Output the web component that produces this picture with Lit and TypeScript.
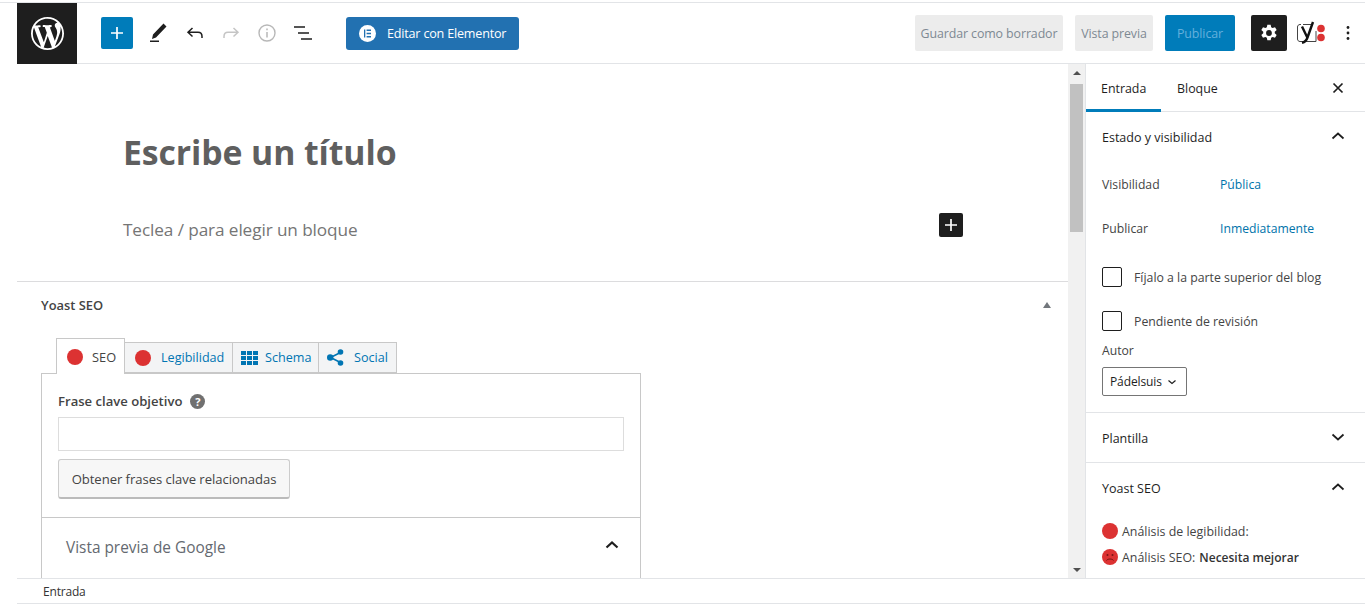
import { LitElement, html, css } from "lit";
import { customElement } from "lit/decorators.js";

const chevUp = html`<svg class="chev" width="24" height="24" viewBox="0 0 24 24"><path d="M6.5 14.5 12 9.5l5.5 5" fill="none" stroke="#1e1e1e" stroke-width="1.7"/></svg>`;
const chevDown = html`<svg class="chev" width="24" height="24" viewBox="0 0 24 24"><path d="M6.5 9.5 12 14.5l5.5-5" fill="none" stroke="#1e1e1e" stroke-width="1.7"/></svg>`;
const dot = (s: number) => html`<svg width=${s} height=${s} viewBox="0 0 16 16"><circle cx="8" cy="8" r="8" fill="#dc3232"/></svg>`;

@customElement("app-root")
export class AppRoot extends LitElement {
  static styles = css`
    :host { display: block; width: 1365px; height: 606px; overflow: hidden; background: #fff; color: #1e1e1e;
      font-family: "Open Sans", "Noto Sans", sans-serif; font-size: 12px; }
    * { box-sizing: border-box; }
    svg { display: block; flex: none; }
    .app { height: 602px; margin-top: 2px; display: flex; flex-direction: column; border-top: 1px solid #e2e4e7; }
    .top { height: 61px; flex: none; display: flex; align-items: center; margin-left: 17px; border-bottom: 1px solid #e2e4e7; padding-right: 5px; }
    .logo { width: 60px; height: 61px; background: #1e1e1e; display: flex; align-items: center; justify-content: center; margin-bottom: -1px; }
    .add { width: 32px; height: 32px; margin-left: 24px; background: #007cba; border-radius: 2px; display: flex; align-items: center; justify-content: center; }
    .tools { display: flex; align-items: center; gap: 12px; margin-left: 14px; }
    .elementor { margin-left: 31px; width: 173px; height: 33px; background: #2271b1; border-radius: 3px; color: #fff; display: flex; align-items: center; gap: 11px; padding: 1px 0 0 13px; font-size: 12.6px; font-weight: 500; letter-spacing: -0.2px; }
    .eicon { width: 17px; height: 17px; border-radius: 50%; background: #fff; display: flex; align-items: center; justify-content: center; margin-top: -1px; }
    .spacer { flex: 1; }
    .btn { height: 36px; padding-top: 1px; display: flex; align-items: center; justify-content: center; border-radius: 2px; font-size: 12.4px; letter-spacing: -0.1px; }
    .grey { background: #ececec; color: #7e8993; }
    .draft { width: 148px; margin-right: 12px; }
    .prev { width: 78px; margin-right: 12px; }
    .pub { width: 70px; background: #007cba; color: #64b0dc; margin-right: 16px; }
    .gear { width: 36px; height: 36px; background: #1e1e1e; border-radius: 2px; display: flex; align-items: center; justify-content: center; margin-right: 10px; }
    .yoast { width: 30px; margin-right: 9px; }
    .more { width: 24px; display: flex; justify-content: center; }
    .body { flex: 1; min-height: 0; display: flex; margin-left: 17px; }
    .main { flex: 1; min-width: 0; display: flex; flex-direction: column; overflow: hidden; }
    .title { margin: 65px 0 0 106px; font-size: 33.8px; line-height: 46px; font-weight: 700; color: #5f5f5f; letter-spacing: -0.1px; }
    .para { display: flex; align-items: center; justify-content: space-between; margin: 39px 105px 0 106px; height: 30px; font-size: 17.2px; color: #757575; letter-spacing: -0.1px; }
    .ins { width: 24px; height: 24px; background: #1e1e1e; border-radius: 2px; display: flex; align-items: center; justify-content: center; margin-top: -8px; }
    .meta { margin-top: 37px; border-top: 1px solid #dcdcde; flex: 1; padding: 0 16px 0 24px; min-height: 0; }
    .mhead { height: 46px; display: flex; align-items: center; justify-content: space-between; font-weight: 600; color: #444; font-size: 12.9px; }
    .tri { width: 0; height: 0; border: 4px solid transparent; border-bottom: 6px solid #72777c; border-top: 0; margin-right: 1px; }
    .tabs { display: flex; align-items: flex-end; margin-left: 15px; height: 36px; margin-top: 9px; position: relative; z-index: 1; }
    .tab { height: 31px; display: flex; align-items: center; border: 1px solid #c8c8c8; border-left: 0; background: #f3f4f5; color: #0075b3; padding: 0 0 0 10px; gap: 10px; font-size: 12.6px; }
    .tab.on { height: 36px; border-left: 1px solid #c8c8c8; border-bottom: 0; background: #fff; color: #444; width: 69px; padding: 0 0 0 10px; gap: 9px; margin-bottom: -1px; font-size: 12.8px; }
    .leg { width: 108px; }
    .sch { width: 86px; padding-left: 8px; gap: 7px; }
    .soc { width: 78px; padding-left: 8px; gap: 10px; }
    .panel { width: 600px; border: 1px solid #c8c8c8; height: 250px; }
    .fields { padding: 16px 16px 18px; border-bottom: 1px solid #c8c8c8; height: 144px; }
    .lab { display: flex; align-items: center; gap: 8px; font-weight: 600; color: #444; font-size: 13.1px; height: 22px; }
    .help { width: 15px; height: 15px; border-radius: 50%; background: #707070; color: #fff; font-size: 11px; font-weight: 700; display: flex; align-items: center; justify-content: center; }
    .inp { height: 34px; border: 1px solid #ddd; margin-top: 5px; }
    .rel { margin-top: 8px; width: 232px; height: 40px; background: #f7f7f7; border: 1px solid #ccc; border-bottom: 2px solid #bbb; border-radius: 3px; display: flex; align-items: center; justify-content: center; color: #444; font-size: 13.1px; letter-spacing: -0.05px; }
    .gprev { height: 58px; display: flex; align-items: center; justify-content: space-between; padding: 0 17px 0 24px; font-size: 15.4px; color: #646970; }
    .gprev svg { margin-top: -4px; }
    .gprev path { stroke-width: 2.2; }
    .scroll { width: 17px; flex: none; background: #f1f1f1; display: flex; flex-direction: column; align-items: center; justify-content: space-between; position: relative; }
    .sb { height: 17px; display: flex; align-items: center; justify-content: center; }
    .up { width: 0; height: 0; border: 4px solid transparent; border-bottom: 4px solid #505050; border-top: 0; }
    .down { width: 0; height: 0; border: 4px solid transparent; border-top: 4px solid #505050; border-bottom: 0; }
    .thumb { position: absolute; left: 2px; top: 20px; width: 13px; height: 148px; background: #c1c1c1; }
    .side { width: 280px; flex: none; border-left: 1px solid #e2e4e7; overflow: hidden; display: flex; flex-direction: column; }
    .stabs { height: 48px; flex: none; display: flex; align-items: stretch; border-bottom: 1px solid #e2e4e7; padding-right: 17px; }
    .stab { display: flex; align-items: center; padding: 1px 15px 0 16px; font-size: 12.4px; font-weight: 500; color: #1e1e1e; position: relative; }
    .stab.on { width: 75px; padding-left: 15px; padding-right: 0; }
    .stab.on::after { content: ""; position: absolute; left: 0; right: 0; bottom: -1px; height: 3px; background: #007cba; }
    .close { margin-left: auto; display: flex; align-items: center; }
    .sec { border-bottom: 1px solid #e2e4e7; padding: 0 16px; }
    .sech { height: 50px; display: flex; align-items: center; justify-content: space-between; font-weight: 500; font-size: 12.5px; color: #1e1e1e; }
    .sech.short { height: 49px; padding-top: 2px; }
    .chev { margin-right: -1px; margin-top: -3px; }
    .row { display: flex; height: 44px; align-items: center; font-size: 12.2px; color: #444; }
    .row .k { width: 118px; }
    .row .v { color: #0073aa; padding-top: 1px; }
    .chk { display: flex; align-items: center; gap: 12px; height: 44px; font-size: 12.3px; color: #444; }
    .first { margin-top: 5px; }
    .box { width: 20px; height: 20px; border: 1px solid #1e1e1e; border-radius: 2px; flex: none; }
    .autor { color: #444; font-size: 12.2px; margin-top: -1px; }
    .sel { width: 85px; height: 29px; margin-top: 8px; border: 1px solid #757575; border-radius: 2px; display: flex; align-items: center; padding-left: 7px; gap: 5px; color: #1e1e1e; font-size: 12px; letter-spacing: -0.1px; }
    .sts { padding-top: 5px; }
    .st { display: flex; align-items: center; gap: 4px; height: 26px; font-size: 12.4px; color: #444; }
    .st b { font-weight: 600; color: #333; font-size: 12px; }
    .foot { height: 26px; flex: none; margin-left: 17px; display: flex; align-items: center; padding-left: 26px; font-size: 12px; color: #333; border-top: 1px solid #e2e4e7; border-bottom: 1px solid #e2e4e7; letter-spacing: -0.2px; }
  `;

  render() {
    return html`<div class="app">
      <div class="top">
        <div class="logo"><svg width="33" height="33" viewBox="0 0 20 20"><path fill="#fff" d="M20 10c0-5.51-4.49-10-10-10C4.48 0 0 4.49 0 10c0 5.52 4.48 10 10 10 5.51 0 10-4.48 10-10zM7.78 15.37L4.37 6.22c.55-.02 1.17-.08 1.17-.08.5-.06.44-1.13-.06-1.11 0 0-1.45.11-2.37.11-.18 0-.37 0-.58-.01C4.12 2.69 6.87 1.11 10 1.11c2.33 0 4.45.87 6.05 2.34-.68-.11-1.65.39-1.65 1.58 0 .74.45 1.36.9 2.1.35.61.55 1.36.55 2.46 0 1.49-1.4 5-1.4 5l-3.03-8.37c.54-.02.82-.17.82-.17.5-.05.44-1.25-.06-1.22 0 0-1.44.12-2.38.12-.87 0-2.33-.12-2.33-.12-.5-.03-.56 1.2-.06 1.22l.92.08 1.26 3.41zM17.41 10c.24-.64.74-1.87.43-4.25.7 1.29 1.05 2.71 1.05 4.25 0 3.29-1.73 6.24-4.4 7.78.97-2.59 1.94-5.2 2.92-7.78zM6.1 18.09C3.12 16.65 1.11 13.53 1.11 10c0-1.3.23-2.48.72-3.59C3.25 10.3 4.67 14.2 6.1 18.09zm4.03-6.63l2.58 6.98c-.86.29-1.76.45-2.71.45-.79 0-1.57-.11-2.29-.33.81-2.38 1.62-4.74 2.42-7.1z"/></svg></div>
        <div class="add"><svg width="18" height="18" viewBox="0 0 18 18"><path d="M9 3v12M3 9h12" stroke="#fff" stroke-width="1.7"/></svg></div>
        <div class="tools">
          <svg width="24" height="24" viewBox="0 0 24 24"><path fill="#1e1e1e" d="M16.5 2.5 19.5 5.5 9 16.5 5 18 6 13.5zM3 19.5h9v1.6H3z"/></svg>
          <svg width="24" height="24" viewBox="0 0 24 24"><path d="M9.5 7 5 11.3l4.5 4.2M5.3 11.3h9.7c2.5 0 4 1.7 4 4.2v1.5" fill="none" stroke="#1e1e1e" stroke-width="1.5"/></svg>
          <svg width="24" height="24" viewBox="0 0 24 24"><path d="M14.5 7 19 11.3l-4.5 4.2M18.7 11.3H9c-2.5 0-4 1.7-4 4.2v1.5" fill="none" stroke="#c5c5c5" stroke-width="1.5"/></svg>
          <svg width="24" height="24" viewBox="0 0 24 24"><circle cx="12" cy="12" r="8" fill="none" stroke="#b8b8b8" stroke-width="1.4"/><path d="M12 11v5.5M12 7.6v1.7" stroke="#b8b8b8" stroke-width="1.5"/></svg>
          <svg width="24" height="24" viewBox="0 0 24 24"><path d="M3 6h11M7 12h11M10 18h11" stroke="#1e1e1e" stroke-width="1.7"/></svg>
        </div>
        <div class="elementor"><span class="eicon"><svg width="9" height="9" viewBox="0 0 9 9"><path d="M1 .5h1.3v8H1zM3.6.5H8v1.4H3.6zM3.6 3.8H8v1.4H3.6zM3.6 7.1H8v1.4H3.6z" fill="#2271b1"/></svg></span>Editar con Elementor</div>
        <div class="spacer"></div>
        <div class="btn grey draft">Guardar como borrador</div>
        <div class="btn grey prev">Vista previa</div>
        <div class="btn pub">Publicar</div>
        <div class="gear"><svg width="20" height="20" viewBox="0 0 24 24"><path fill="#fff" fill-rule="evenodd" d="M10 2h4l.6 3 1.7 1 2.9-1 2 3.4-2.3 2v2l2.3 2-2 3.4-2.9-1-1.7 1-.6 3h-4l-.6-3-1.7-1-2.9 1-2-3.4 2.3-2v-2l-2.3-2 2-3.4 2.9 1 1.7-1zM12 8.5a3.5 3.5 0 1 0 0 7 3.5 3.5 0 0 0 0-7z"/></svg></div>
        <div class="yoast"><svg width="30" height="24" viewBox="0 0 30 24"><path d="M4 3.5H3c-1.4 0-2.5 1-2.5 2.5v12c0 1.4 1 2.5 2.5 2.5h16V10" fill="none" stroke="#444" stroke-width="1"/><path d="M6 3.5h10" stroke="#444" stroke-width="1"/><path d="M5 5.5 10.3 16.5M16 1 10.5 16.5C9.5 19.5 8 21 5 21.8" fill="none" stroke="#111" stroke-width="2.4"/><circle cx="24" cy="7.5" r="3.8" fill="#dc3232"/><circle cx="24" cy="16.5" r="3.8" fill="#dc3232"/></svg></div>
        <div class="more"><svg width="24" height="24" viewBox="0 0 24 24"><circle cx="12" cy="6.5" r="1.4" fill="#1e1e1e"/><circle cx="12" cy="12" r="1.4" fill="#1e1e1e"/><circle cx="12" cy="17.5" r="1.4" fill="#1e1e1e"/></svg></div>
      </div>
      <div class="body">
        <div class="main">
          <div class="title">Escribe un título</div>
          <div class="para"><span>Teclea / para elegir un bloque</span><span class="ins"><svg width="16" height="16" viewBox="0 0 16 16"><path d="M8 2v12M2 8h12" stroke="#fff" stroke-width="1.7"/></svg></span></div>
          <div class="meta">
            <div class="mhead"><span>Yoast SEO</span><span class="tri"></span></div>
            <div class="tabs">
              <div class="tab on">${dot(16)}SEO</div>
              <div class="tab leg">${dot(16)}Legibilidad</div>
              <div class="tab sch"><svg width="17" height="14" viewBox="0 0 17 14"><path fill="#0075b3" d="M0 0h5v4H0zM6 0h5v4H6zM12 0h5v4h-5zM0 5h5v4H0zM6 5h5v4H6zM12 5h5v4h-5zM0 10h5v4H0zM6 10h5v4H6zM12 10h5v4h-5z"/></svg>Schema</div>
              <div class="tab soc"><svg width="17" height="17" viewBox="0 0 17 17"><path d="M13.5 3.5 3.5 8.5l10 5" fill="none" stroke="#0075b3" stroke-width="1.6"/><circle cx="13.5" cy="3" r="2.8" fill="#0075b3"/><circle cx="3.2" cy="8.5" r="3.2" fill="#0075b3"/><circle cx="13.5" cy="14" r="2.8" fill="#0075b3"/></svg>Social</div>
            </div>
            <div class="panel">
              <div class="fields">
                <div class="lab">Frase clave objetivo <span class="help">?</span></div>
                <div class="inp"></div>
                <div class="rel">Obtener frases clave relacionadas</div>
              </div>
              <div class="gprev"><span>Vista previa de Google</span>${chevUp}</div>
            </div>
          </div>
        </div>
        <div class="scroll"><div class="sb"><span class="up"></span></div><div class="thumb"></div><div class="sb"><span class="down"></span></div></div>
        <div class="side">
          <div class="stabs">
            <div class="stab on">Entrada</div>
            <div class="stab">Bloque</div>
            <div class="close"><svg width="20" height="20" viewBox="0 0 20 20"><path d="M5.5 5.5l9 9M14.5 5.5l-9 9" stroke="#1e1e1e" stroke-width="1.7"/></svg></div>
          </div>
          <div class="sec" style="height:301px">
            <div class="sech"><span>Estado y visibilidad</span>${chevUp}</div>
            <div class="row"><span class="k">Visibilidad</span><span class="v">Pública</span></div>
            <div class="row"><span class="k">Publicar</span><span class="v">Inmediatamente</span></div>
            <div class="chk first"><span class="box"></span>Fíjalo a la parte superior del blog</div>
            <div class="chk"><span class="box"></span>Pendiente de revisión</div>
            <div class="autor">Autor</div>
            <div class="sel">Pádelsuis <svg width="10" height="10" viewBox="0 0 10 10"><path d="M1.5 3.5 5 6.5l3.5-3" fill="none" stroke="#1e1e1e" stroke-width="1.2"/></svg></div>
          </div>
          <div class="sec"><div class="sech short"><span>Plantilla</span>${chevDown}</div></div>
          <div class="sec" style="border:0">
            <div class="sech"><span>Yoast SEO</span>${chevUp}</div>
            <div class="sts">
              <div class="st">${dot(16)}Análisis de legibilidad:</div>
              <div class="st"><svg width="16" height="16" viewBox="0 0 16 16"><circle cx="8" cy="8" r="8" fill="#dc3232"/><circle cx="5.5" cy="6" r="1" fill="#7a1414"/><circle cx="10.5" cy="6" r="1" fill="#7a1414"/><path d="M4.5 11.5c1-2 6-2 7 0" fill="none" stroke="#7a1414" stroke-width="1"/></svg>Análisis SEO: <b>Necesita mejorar</b></div>
            </div>
          </div>
        </div>
      </div>
      <div class="foot">Entrada</div>
    </div>`;
  }
}
